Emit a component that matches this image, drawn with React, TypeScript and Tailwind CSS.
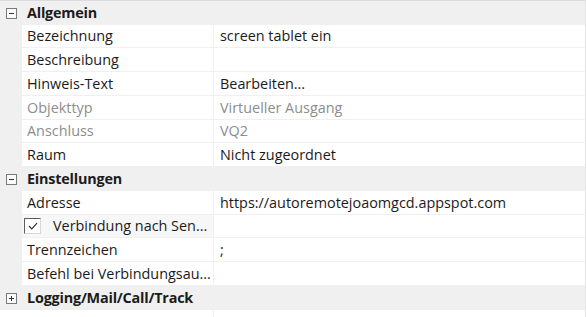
import React from "react";

type Row =
  | { kind: "group"; label: string; open: boolean; h: string }
  | { kind: "prop"; name: string; value?: string; disabled?: boolean; check?: boolean; h: string };

const rows: Row[] = [
  { kind: "group", label: "Allgemein", open: true, h: "h-[24px]" },
  { kind: "prop", name: "Bezeichnung", value: "screen tablet ein", h: "h-[23px]" },
  { kind: "prop", name: "Beschreibung", h: "h-[24px]" },
  { kind: "prop", name: "Hinweis-Text", value: "Bearbeiten...", h: "h-[24px]" },
  { kind: "prop", name: "Objekttyp", value: "Virtueller Ausgang", disabled: true, h: "h-[24px]" },
  { kind: "prop", name: "Anschluss", value: "VQ2", disabled: true, h: "h-[23px]" },
  { kind: "prop", name: "Raum", value: "Nicht zugeordnet", h: "h-[24px]" },
  { kind: "group", label: "Einstellungen", open: true, h: "h-[24px]" },
  { kind: "prop", name: "Adresse", value: "https://autoremotejoaomgcd.appspot.com", h: "h-[24px]" },
  { kind: "prop", name: "Verbindung nach Sen...", check: true, h: "h-[23px]" },
  { kind: "prop", name: "Trennzeichen", value: ";", h: "h-[24px]" },
  { kind: "prop", name: "Befehl bei Verbindungsau...", h: "h-[24px]" },
  { kind: "group", label: "Logging/Mail/Call/Track", open: false, h: "h-[24px]" },
];

function ExpandBox({ open }: { open: boolean }) {
  return (
    <svg width="11" height="11" viewBox="0 0 11 11" className="shrink-0">
      <rect x="0.5" y="0.5" width="10" height="10" fill="#fafafa" stroke="#7a7a7a" />
      <path d="M3 5.5h5" stroke="#333" />
      {!open && <path d="M5.5 3v5" stroke="#333" />}
    </svg>
  );
}

export default function App() {
  return (
    <div
      className="w-[586px] h-[317px] bg-white overflow-hidden border-t border-[#dcdcdc] text-[14.4px] text-[#1b1b1b]"
      style={{ fontFamily: '"Open Sans", "Noto Sans", sans-serif' }}
    >
      {rows.map((r, i) =>
        r.kind === "group" ? (
          <div key={i} className={`${r.h} flex items-center bg-[#f0f0f0] border-r border-[#e4e4e4]`}>
            <div className="w-[27px] pl-[6px] flex items-center">
              <ExpandBox open={r.open} />
            </div>
            <span className="font-bold tracking-[-0.2px]">{r.label}</span>
          </div>
        ) : (
          <div key={i} className={`${r.h} flex bg-[#f0f0f0]`}>
            <div className="w-[22px] shrink-0" />
            <div
              className={`w-[191px] shrink-0 flex items-center border-b border-[#f0f0f0] ${
                r.check ? "bg-[#f7f7f7]" : "bg-white"
              } ${r.disabled ? "text-[#8d8d8d]" : ""}`}
            >
              {r.check ? (
                <>
                  <span className="ml-[2px] w-[17px] h-[16px] border-l border-t border-[#5e5e5e] border-r border-b border-r-[#d8d8d8] border-b-[#d8d8d8] flex items-center justify-center bg-white">
                    <svg width="10" height="8" viewBox="0 0 10 8">
                      <path d="M1 4l2.8 2.8L9 1.2" fill="none" stroke="#333" strokeWidth="1.2" />
                    </svg>
                  </span>
                  <span className="ml-[12px] whitespace-nowrap">{r.name}</span>
                </>
              ) : (
                <span className="pl-[5px] whitespace-nowrap">{r.name}</span>
              )}
            </div>
            <div className="w-px shrink-0 bg-[#f0f0f0]" />
            <div
              className={`flex-1 flex items-center bg-white border-b border-[#f0f0f0] border-r border-r-[#e4e4e4] pl-[6px] ${
                r.disabled ? "text-[#8d8d8d]" : ""
              }`}
            >
              <span className="whitespace-nowrap">{r.value ?? ""}</span>
            </div>
          </div>
        )
      )}
      <div className="h-[10px] flex">
        <div className="w-[213px] shrink-0 bg-white" />
        <div className="w-px bg-[#f0f0f0]" />
        <div className="flex-1 bg-white border-r border-[#e4e4e4]" />
      </div>
    </div>
  );
}
